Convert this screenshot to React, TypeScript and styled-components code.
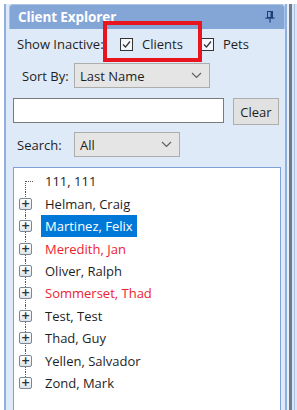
import styled, { createGlobalStyle } from "styled-components";

const GlobalStyle = createGlobalStyle`
    html, body {
        margin: 0;
        padding: 0;
        background: #ffffff;
    }
    body {
        font-family: "Open Sans", "Noto Sans", "DejaVu Sans", sans-serif;
        font-size: 13px;
        color: #1e1e1e;
    }
`;

type Client = { name: string; inactive?: boolean; selected?: boolean; leaf?: boolean };

const CLIENTS: Client[] = [
    { name: "111, 111", leaf: true },
    { name: "Helman, Craig" },
    { name: "Martinez, Felix", selected: true },
    { name: "Meredith, Jan", inactive: true },
    { name: "Oliver, Ralph" },
    { name: "Sommerset, Thad", inactive: true },
    { name: "Test, Test" },
    { name: "Thad, Guy" },
    { name: "Yellen, Salvador" },
    { name: "Zond, Mark" },
];

function Chevron() {
    return (
        <svg width="11" height="7" viewBox="0 0 11 7">
            <polyline points="1,1 5.5,5.5 10,1" fill="none" stroke="#606060" strokeWidth="1.2" />
        </svg>
    );
}

function Pin() {
    return (
        <svg width="10" height="12" viewBox="0 0 10 12">
            <rect x="2.5" y="0.5" width="5" height="6" fill="none" stroke="#1d3f78" strokeWidth="1" />
            <rect x="5.5" y="1" width="1.5" height="5" fill="#1d3f78" />
            <rect x="0.5" y="6.5" width="9" height="1.2" fill="#1d3f78" />
            <rect x="4.4" y="7.5" width="1.2" height="4" fill="#1d3f78" />
        </svg>
    );
}

function Check() {
    return (
        <svg width="11" height="11" viewBox="0 0 11 11">
            <polyline points="2,5.5 4.5,8 9,2.5" fill="none" stroke="#333" strokeWidth="1.2" />
        </svg>
    );
}

export default function App() {
    return (
        <>
            <GlobalStyle />
            <Page>
                <Panel>
                    <Header>
                        <Title>Client Explorer</Title>
                        <Pin />
                    </Header>
                    <Body>
                        <InactiveRow>
                            <InactiveLabel>Show Inactive:</InactiveLabel>
                            <CheckGroup $width={81}>
                                <CheckBox>
                                    <Check />
                                </CheckBox>
                                <span>Clients</span>
                            </CheckGroup>
                            <CheckGroup $width={60}>
                                <CheckBox>
                                    <Check />
                                </CheckBox>
                                <span>Pets</span>
                            </CheckGroup>
                        </InactiveRow>
                        <SelectRow $top={4}>
                            <FieldLabel $indent={9}>Sort By:</FieldLabel>
                            <Select $width={136}>
                                <span>Last Name</span>
                                <Chevron />
                            </Select>
                        </SelectRow>
                        <SearchRow>
                            <TextBox />
                            <ClearButton>Clear</ClearButton>
                        </SearchRow>
                        <SelectRow $top={7}>
                            <FieldLabel $indent={4}>Search:</FieldLabel>
                            <Select $width={106}>
                                <span>All</span>
                                <Chevron />
                            </Select>
                        </SelectRow>
                        <Tree>
                            {CLIENTS.map((c, i) => (
                                <TreeRow key={c.name}>
                                    <Connector $first={i === 0} $last={i === CLIENTS.length - 1}>
                                        {c.leaf ? <Branch /> : <Expander>+</Expander>}
                                    </Connector>
                                    <NodeLabel $selected={c.selected} $inactive={c.inactive}>
                                        {c.name}
                                    </NodeLabel>
                                </TreeRow>
                            ))}
                        </Tree>
                    </Body>
                    <Highlight />
                </Panel>
                <Splitter>
                    <SplitLine $color="#e9eff8" $width={2} />
                    <SplitLine $color="#6d7b8e" $width={3} />
                    <SplitLine $color="#dbe6f5" $width={2} />
                    <SplitLine $color="#a8bfdf" $width={1} />
                    <SplitLine $color="#dbe6f5" $width={2} />
                </Splitter>
            </Page>
        </>
    );
}

const Page = styled.div`
    display: flex;
    height: 410px;
    padding: 4px 0 0 4px;
    box-sizing: border-box;
    overflow: hidden;
`;

const Panel = styled.div`
    position: relative;
    width: 283px;
    display: flex;
    flex-direction: column;
    background: #dfeaf8;
    border-left: 2px solid #8fb0df;
    border-right: 2px solid #8fb0df;
    box-sizing: border-box;
`;

const Header = styled.div`
    display: flex;
    align-items: center;
    justify-content: space-between;
    height: 25px;
    margin: 0 0 0 3px;
    padding: 0 9px 0 8px;
    background: #84a6d7;
    border-radius: 4px 4px 0 0;
    border: 1px solid #a9c2e6;
    border-bottom: none;
    box-sizing: border-box;
`;

const Title = styled.div`
    color: #ffffff;
    font-weight: 700;
    font-size: 13.5px;
    letter-spacing: -0.1px;
`;

const Body = styled.div`
    display: flex;
    flex-direction: column;
    padding-left: 7px;
    flex: 1;
`;

const InactiveRow = styled.div`
    display: flex;
    align-items: center;
    height: 30px;
`;

const InactiveLabel = styled.div`
    width: 107px;
    padding-left: 4px;
    box-sizing: border-box;
    white-space: nowrap;
`;

const CheckGroup = styled.div<{ $width: number }>`
    display: flex;
    align-items: center;
    gap: 9px;
    width: ${(p) => p.$width}px;
`;

const CheckBox = styled.div`
    width: 13px;
    height: 13px;
    border: 1px solid #333333;
    background: #f4f8fd;
    box-sizing: border-box;
    display: flex;
    align-items: center;
    justify-content: center;
`;

const SelectRow = styled.div<{ $top: number }>`
    display: flex;
    align-items: center;
    margin-top: ${(p) => p.$top}px;
    height: 25px;
`;

const FieldLabel = styled.div<{ $indent: number }>`
    width: 61px;
    padding-left: ${(p) => p.$indent}px;
    box-sizing: border-box;
    white-space: nowrap;
`;

const Select = styled.div<{ $width: number }>`
    display: flex;
    align-items: center;
    justify-content: space-between;
    width: ${(p) => p.$width}px;
    height: 25px;
    padding: 0 7px 0 5px;
    background: #e5e5e5;
    border: 1px solid #adadad;
    box-sizing: border-box;
`;

const SearchRow = styled.div`
    display: flex;
    align-items: flex-start;
    gap: 9px;
    margin-top: 10px;
    height: 27px;
`;

const TextBox = styled.div`
    width: 211px;
    height: 25px;
    background: #ffffff;
    border: 1px solid #7a7a7a;
    box-sizing: border-box;
`;

const ClearButton = styled.div`
    display: flex;
    align-items: center;
    justify-content: center;
    width: 46px;
    height: 27px;
    background: #e1e1e1;
    border: 1px solid #adadad;
    box-sizing: border-box;
`;

const Tree = styled.div`
    margin-top: 10px;
    width: 268px;
    flex: 1;
    background: #ffffff;
    border: 1px solid #7ea3d8;
    border-bottom: none;
    padding-top: 2px;
    box-sizing: border-box;
`;

const TreeRow = styled.div`
    display: flex;
    align-items: center;
    height: 22.45px;
`;

const Connector = styled.div<{ $first: boolean; $last: boolean }>`
    position: relative;
    width: 27px;
    height: 100%;
    flex-shrink: 0;
    &::before {
        content: "";
        position: absolute;
        left: 11px;
        top: ${(p) => (p.$first ? "50%" : "0")};
        bottom: ${(p) => (p.$last ? "50%" : "0")};
        border-left: 1px dotted #555555;
    }
`;

const Branch = styled.div`
    position: absolute;
    left: 11px;
    top: 50%;
    width: 8px;
    border-top: 1px dotted #555555;
`;

const Expander = styled.div`
    position: absolute;
    left: 5px;
    top: 50%;
    margin-top: -6px;
    width: 13px;
    height: 12px;
    box-sizing: border-box;
    border: 1px solid #7c8796;
    border-radius: 2px;
    background: linear-gradient(#ffffff, #dfe4ea);
    color: #2a3340;
    font-family: "DejaVu Sans", sans-serif;
    font-size: 11px;
    font-weight: 700;
    line-height: 9px;
    text-align: center;
`;

const NodeLabel = styled.div<{ $selected?: boolean; $inactive?: boolean }>`
    padding: 0 4px;
    height: 22px;
    line-height: 22px;
    white-space: nowrap;
    color: ${(p) => (p.$selected ? "#ffffff" : p.$inactive ? "#ee2230" : "#1e1e1e")};
    background: ${(p) => (p.$selected ? "#0078d7" : "transparent")};
`;

const Highlight = styled.div`
    position: absolute;
    left: 97px;
    top: 17px;
    width: 99px;
    height: 41px;
    border: 4px solid #e8141e;
    box-sizing: border-box;
    pointer-events: none;
`;

const Splitter = styled.div`
    display: flex;
    height: 100%;
`;

const SplitLine = styled.div<{ $color: string; $width: number }>`
    width: ${(p) => p.$width}px;
    background: ${(p) => p.$color};
`;
